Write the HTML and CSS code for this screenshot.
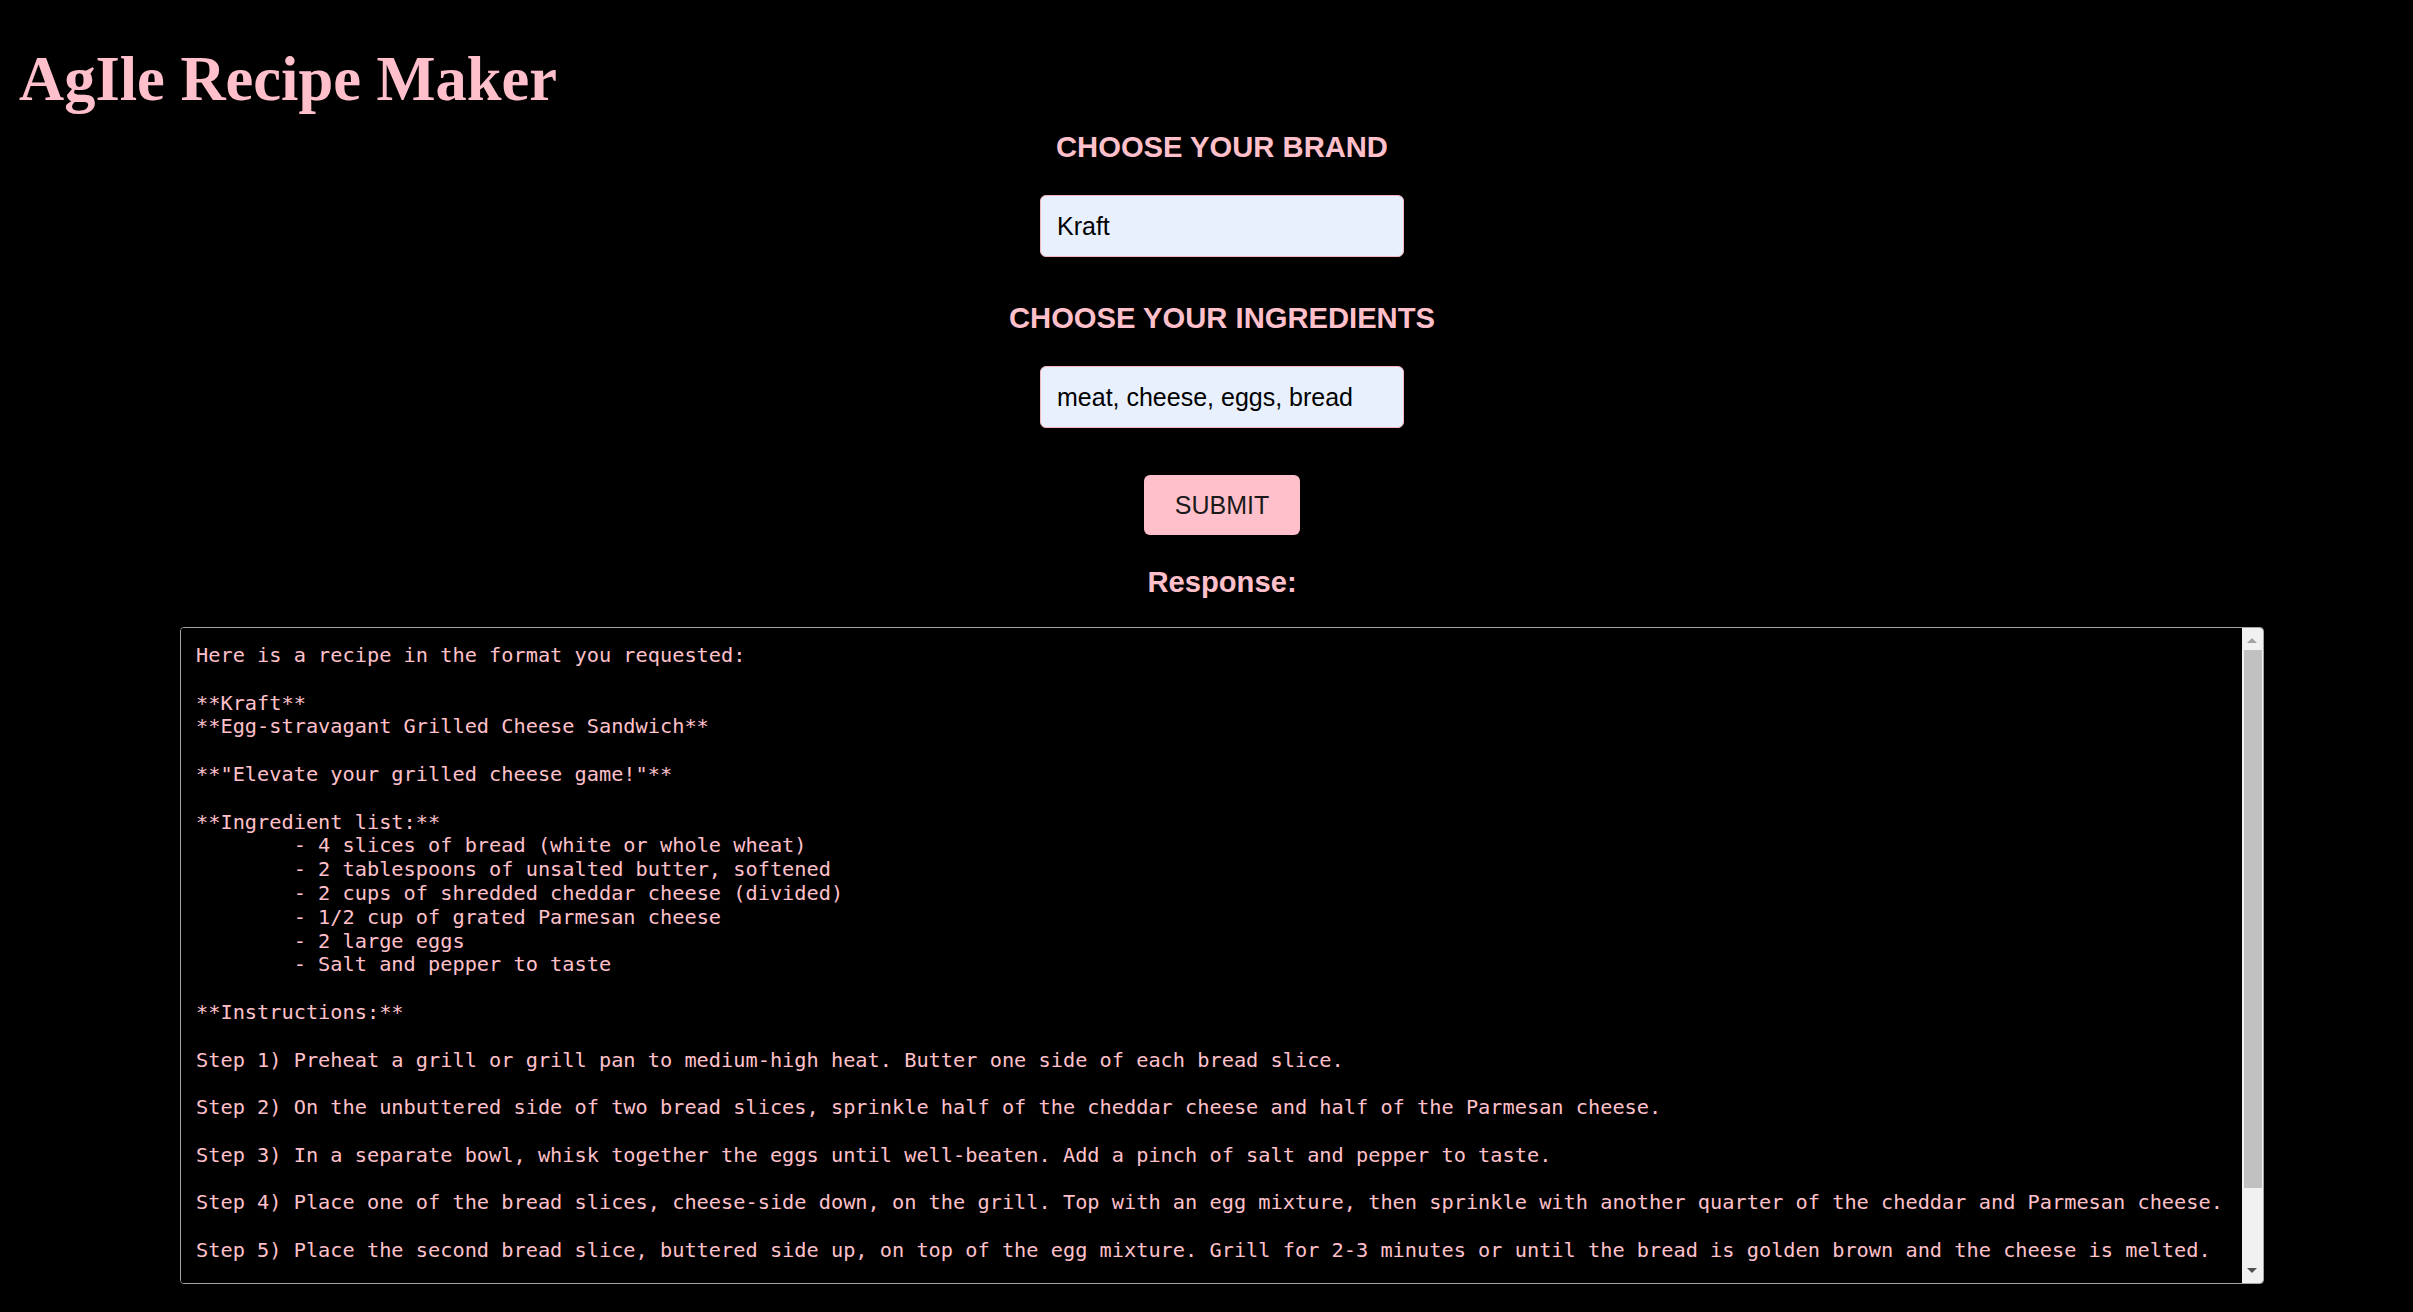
FILE: index.html
```html
<!DOCTYPE html>
<html lang="en">
<head>
<meta charset="utf-8">
<title>AgIle Recipe Maker</title>
<link rel="stylesheet" href="styles.css">
</head>
<body>
<h1 class="app-title">AgIle Recipe Maker</h1>
<main class="form">
  <h2 class="field-label">CHOOSE YOUR BRAND</h2>
  <input class="field-input" type="text" value="Kraft">
  <h2 class="field-label field-label--second">CHOOSE YOUR INGREDIENTS</h2>
  <input class="field-input" type="text" value="meat, cheese, eggs, bread">
  <button class="submit-btn" type="button">SUBMIT</button>
  <h2 class="response-label">Response:</h2>
  <div class="response-box">
    <textarea class="response-text" readonly>Here is a recipe in the format you requested:

**Kraft**
**Egg-stravagant Grilled Cheese Sandwich**

**"Elevate your grilled cheese game!"**

**Ingredient list:**
	- 4 slices of bread (white or whole wheat)
	- 2 tablespoons of unsalted butter, softened
	- 2 cups of shredded cheddar cheese (divided)
	- 1/2 cup of grated Parmesan cheese
	- 2 large eggs
	- Salt and pepper to taste

**Instructions:**

Step 1) Preheat a grill or grill pan to medium-high heat. Butter one side of each bread slice.

Step 2) On the unbuttered side of two bread slices, sprinkle half of the cheddar cheese and half of the Parmesan cheese.

Step 3) In a separate bowl, whisk together the eggs until well-beaten. Add a pinch of salt and pepper to taste.

Step 4) Place one of the bread slices, cheese-side down, on the grill. Top with an egg mixture, then sprinkle with another quarter of the cheddar and Parmesan cheese.

Step 5) Place the second bread slice, buttered side up, on top of the egg mixture. Grill for 2-3 minutes or until the bread is golden brown and the cheese is melted.

Step 6) Carefully flip the sandwich and grill for another 2-3 minutes, until the other side is golden brown.

Enjoy your Egg-stravagant Grilled Cheese Sandwich!</textarea>
    <div class="scrollbar" aria-hidden="true">
      <div class="scroll-btn scroll-btn--up"><span class="arrow arrow--up"></span></div>
      <div class="scroll-track"><div class="scroll-thumb"></div></div>
      <div class="scroll-btn scroll-btn--down"><span class="arrow arrow--down"></span></div>
    </div>
  </div>
</main>
</body>
</html>
```
FILE: styles.css
```css
html, body {
  margin: 0;
  padding: 0;
  background: #000;
}

body {
  font-family: "Liberation Sans", Arial, sans-serif;
  color: #ffc0cb;
  height: 1312px;
  overflow: hidden;
}

.app-title {
  margin: 0;
  padding: 43px 0 0 19px;
  font-family: "Liberation Serif", "Times New Roman", serif;
  font-weight: 700;
  font-size: 62.5px;
  line-height: 72px;
  color: #ffc0cb;
}

.form {
  display: flex;
  flex-direction: column;
  align-items: center;
  padding-left: 31px;
}

.field-label,
.response-label {
  margin: 15.5px 0 0;
  font-size: 29.2px;
  line-height: 33px;
  font-weight: 700;
  color: #ffc0cb;
}

.field-label--second {
  margin-top: 44.5px;
}

.field-input {
  box-sizing: border-box;
  width: 364px;
  height: 62px;
  margin: 31.5px 0 0;
  padding: 0 16px;
  background: #e8f0fe;
  border: 1px solid #f3b6c0;
  border-radius: 6px;
  font-family: "Liberation Sans", Arial, sans-serif;
  font-size: 25px;
  color: #000;
  outline: none;
}

.submit-btn {
  box-sizing: border-box;
  width: 156px;
  height: 60px;
  margin-top: 47px;
  padding: 0;
  background: #ffc0cb;
  border: none;
  border-radius: 6px;
  font-family: "Liberation Sans", Arial, sans-serif;
  font-size: 25px;
  color: #1a1a1a;
}

.response-label {
  margin-top: 30.5px;
}

.response-box {
  box-sizing: border-box;
  display: flex;
  width: 2084px;
  height: 657px;
  margin-top: 28.5px;
  background: #000;
  border: 1px solid #a3a3a3;
  border-radius: 4px;
  overflow: hidden;
}

.response-text {
  flex: 1;
  min-width: 0;
  margin: 0;
  padding: 16px 0 0 15px;
  background: #000;
  color: #ffc0cb;
  border: none;
  font-family: "DejaVu Sans Mono", "Liberation Mono", monospace;
  font-size: 20.3px;
  line-height: 23.8px;
  tab-size: 8;
  white-space: pre;
  overflow: hidden;
  resize: none;
  outline: none;
}

.scrollbar {
  display: flex;
  flex-direction: column;
  width: 21px;
  flex: none;
  background: #f1f1f1;
}

.scroll-btn {
  box-sizing: border-box;
  height: 22px;
  flex: none;
  padding-left: 5px;
}

.scroll-btn--up {
  padding-top: 10px;
}

.scroll-btn--down {
  padding-top: 7px;
}

.arrow {
  display: block;
  width: 0;
  height: 0;
  border-left: 5px solid transparent;
  border-right: 5px solid transparent;
}

.arrow--up {
  border-bottom: 5px solid #a3a3a3;
}

.arrow--down {
  border-top: 5px solid #505050;
}

.scroll-track {
  flex: 1;
}

.scroll-thumb {
  height: 538px;
  margin: 0 1px 0 2px;
  background: #c1c1c1;
}
```
